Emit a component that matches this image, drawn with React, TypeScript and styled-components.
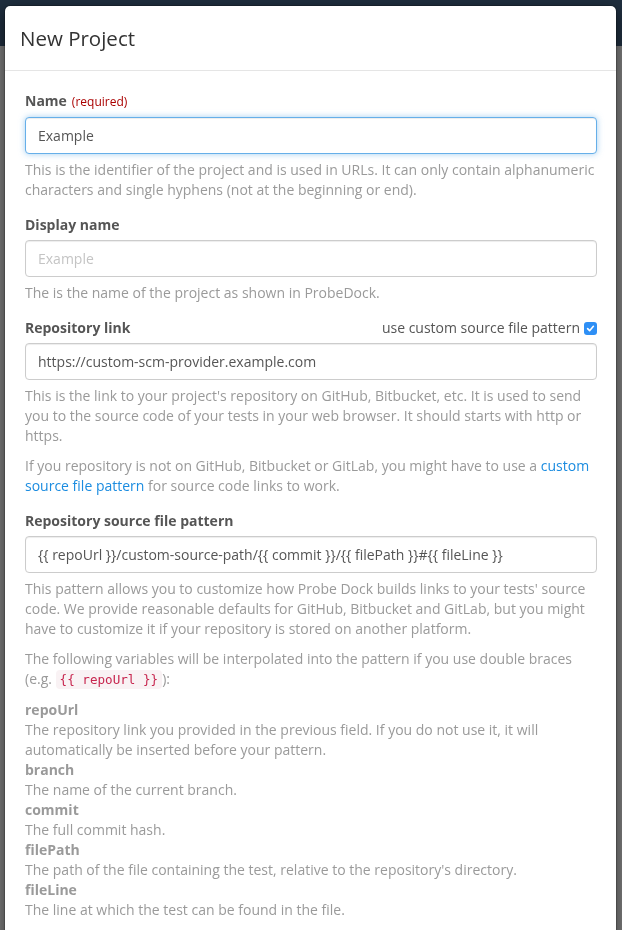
import React from "react";
import styled, { createGlobalStyle } from "styled-components";

const Global = createGlobalStyle`
  html, body { margin: 0; padding: 0; }
  body {
    font-family: "Open Sans", "Liberation Sans", sans-serif;
    font-size: 14px;
    line-height: 20px;
    color: #555;
    overflow: hidden;
  }
  * { box-sizing: border-box; }
`;

const Page = styled.div`
  height: 930px;
  display: flex;
  flex-direction: column;
  background: #7b7b7b;
`;

const Navbar = styled.div`
  height: 46px;
  background: #1f2e3e;
  flex: none;
`;

const ModalLayer = styled.div`
  position: fixed;
  inset: 0;
  padding: 5px 5px 0 4px;
  overflow: hidden;
`;

const Dialog = styled.div`
  width: 613px;
  background: #fff;
  border: 1px solid rgba(0, 0, 0, 0.2);
  border-radius: 6px;
  box-shadow: 0 5px 15px rgba(0, 0, 0, 0.5);
  background-clip: padding-box;
`;

const Header = styled.div`
  padding: 15px;
  border-bottom: 1px solid #e5e5e5;
`;

const Title = styled.h4`
  margin: 0;
  font-size: 20.5px;
  line-height: 34px;
  font-weight: 400;
  color: #333;
`;

const Body = styled.div`
  padding: 20px 19px 20px 20px;
`;

const FormGroup = styled.div`
  margin-bottom: 15px;
`;

const LabelRow = styled.div`
  display: flex;
  justify-content: space-between;
  align-items: center;
  margin-bottom: 5px;
`;

const Label = styled.label`
  font-weight: 700;
  color: #555;
`;

const Required = styled.small`
  font-size: 12px;
  font-weight: 400;
  color: #a00;
  margin-left: 5px;
`;

const CheckLabel = styled.label`
  display: flex;
  align-items: center;
  gap: 4px;
  color: #555;
`;

const CheckBox = styled.span`
  width: 13px;
  height: 13px;
  border-radius: 3px;
  background: #2e8ff5;
  display: inline-flex;
  align-items: center;
  justify-content: center;
`;

const Input = styled.input<{ $focus?: boolean }>`
  display: block;
  width: 100%;
  height: 37px;
  padding: 6px 12px;
  font-family: inherit;
  font-size: 14px;
  color: #555;
  background: #fff;
  border: 1px solid ${(p) => (p.$focus ? "#66afe9" : "#ccc")};
  border-radius: 4px;
  outline: none;
  box-shadow: ${(p) =>
    p.$focus
      ? "inset 0 1px 1px rgba(0,0,0,.075), 0 0 6px rgba(102,175,233,.6)"
      : "inset 0 1px 1px rgba(0,0,0,.075)"};
  &::placeholder {
    color: #c4c4c4;
  }
`;

const Help = styled.p`
  margin: 6px 0 10px;
  color: #9a9a9a;
`;

const Link = styled.a`
  color: #1b8ce0;
  text-decoration: none;
`;

const Code = styled.code`
  font-family: "DejaVu Sans Mono", "Liberation Mono", monospace;
  font-size: 90%;
  padding: 2px 4px;
  color: #c7254e;
  background: #f9f2f4;
  border-radius: 4px;
`;

const VarList = styled.dl`
  margin: 0 0 20px;
  color: #9a9a9a;
`;

const Term = styled.dt`
  font-weight: 700;
`;

const Desc = styled.dd`
  margin: 0;
`;

const vars: [string, string][] = [
  [
    "repoUrl",
    "The repository link you provided in the previous field. If you do not use it, it will automatically be inserted before your pattern.",
  ],
  ["branch", "The name of the current branch."],
  ["commit", "The full commit hash."],
  ["filePath", "The path of the file containing the test, relative to the repository's directory."],
  ["fileLine", "The line at which the test can be found in the file."],
];

export default function App() {
  return (
    <>
      <Global />
      <Page>
        <Navbar />
      </Page>
      <ModalLayer>
        <Dialog>
          <Header>
            <Title>New Project</Title>
          </Header>
          <Body>
            <FormGroup>
              <LabelRow>
                <Label>
                  Name<Required>(required)</Required>
                </Label>
              </LabelRow>
              <Input $focus defaultValue="Example" />
              <Help>
                This is the identifier of the project and is used in URLs. It can only contain alphanumeric
                characters and single hyphens (not at the beginning or end).
              </Help>
            </FormGroup>

            <FormGroup>
              <LabelRow>
                <Label>Display name</Label>
              </LabelRow>
              <Input placeholder="Example" />
              <Help>The is the name of the project as shown in ProbeDock.</Help>
            </FormGroup>

            <FormGroup>
              <LabelRow>
                <Label>Repository link</Label>
                <CheckLabel>
                  use custom source file pattern
                  <CheckBox>
                    <svg width="9" height="9" viewBox="0 0 10 10">
                      <path d="M1.8 5.2 L4 7.4 L8.2 2.6" fill="none" stroke="#fff" strokeWidth="1.8" strokeLinecap="round" strokeLinejoin="round" />
                    </svg>
                  </CheckBox>
                </CheckLabel>
              </LabelRow>
              <Input defaultValue="https://custom-scm-provider.example.com" />
              <Help>
                This is the link to your project's repository on GitHub, Bitbucket, etc. It is used to send
                you to the source code of your tests in your web browser. It should starts with http or
                https.
              </Help>
              <Help>
                If you repository is not on GitHub, Bitbucket or GitLab, you might have to use a{" "}
                <Link href="#">custom source file pattern</Link> for source code links to work.
              </Help>
            </FormGroup>

            <FormGroup>
              <LabelRow>
                <Label>Repository source file pattern</Label>
              </LabelRow>
              <Input defaultValue="{{ repoUrl }}/custom-source-path/{{ commit }}/{{ filePath }}#{{ fileLine }}" />
              <Help>
                This pattern allows you to customize how Probe Dock builds links to your tests' source
                code. We provide reasonable defaults for GitHub, Bitbucket and GitLab, but you might
                have to customize it if your repository is stored on another platform.
              </Help>
              <Help>
                The following variables will be interpolated into the pattern if you use double braces
                (e.g. <Code>{"{{ repoUrl }}"}</Code>):
              </Help>
              <VarList>
                {vars.map(([k, v]) => (
                  <React.Fragment key={k}>
                    <Term>{k}</Term>
                    <Desc>{v}</Desc>
                  </React.Fragment>
                ))}
              </VarList>
            </FormGroup>
          </Body>
        </Dialog>
      </ModalLayer>
    </>
  );
}
